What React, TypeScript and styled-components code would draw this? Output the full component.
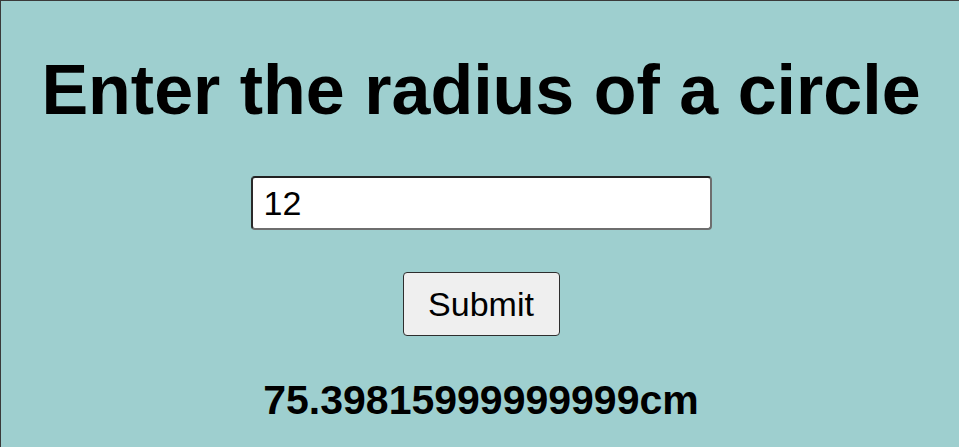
import React, { useState } from 'react';
import styled, { createGlobalStyle } from 'styled-components';

const GlobalStyle = createGlobalStyle`
  html, body {
    margin: 0;
    padding: 0;
    height: 100%;
  }
  body {
    background: #9ecfcf;
    font-family: 'Liberation Sans', Arial, sans-serif;
  }
  #root {
    min-height: 100%;
  }
`;

const Page = styled.div`
  box-sizing: border-box;
  min-height: 100vh;
  border-top: 1px solid #3a3a3a;
  border-left: 1px solid #3a3a3a;
  padding: 49px 0 0 2px;
  display: flex;
  flex-direction: column;
  align-items: center;
  background: #9ecfcf;
`;

const Heading = styled.h1`
  margin: 0 0 46px;
  font-size: 70px;
  font-weight: 700;
  line-height: normal;
  color: #000;
  white-space: nowrap;
`;

const RadiusInput = styled.input`
  box-sizing: border-box;
  width: 461px;
  height: 54px;
  padding: 0 11px;
  font-family: 'Liberation Sans', Arial, sans-serif;
  font-size: 34px;
  color: #000;
  background: #fff;
  border-style: solid;
  border-width: 2px;
  border-color: #222 #6e6e6e #6e6e6e #2a2a2a;
  border-radius: 4px;
  outline: none;
`;

const SubmitButton = styled.button`
  box-sizing: border-box;
  margin-top: 42px;
  width: 157px;
  height: 64px;
  padding: 0;
  font-family: 'Liberation Sans', Arial, sans-serif;
  font-size: 34px;
  color: #000;
  background: #efefef;
  border: 1px solid #2e2e2e;
  border-radius: 4px;
  cursor: pointer;
`;

const Result = styled.h2`
  margin: 41px 0 0;
  font-size: 41px;
  font-weight: 700;
  line-height: normal;
  color: #000;
`;

export default function App() {
  const [radius, setRadius] = useState('12');
  const [area, setArea] = useState<number>(2 * 3.14159 * 12);

  return (
    <Page>
      <GlobalStyle />
      <Heading>Enter the radius of a circle</Heading>
      <RadiusInput
        type="text"
        value={radius}
        onChange={(e) => setRadius(e.target.value)}
      />
      <SubmitButton onClick={() => setArea(2 * 3.14159 * Number(radius))}>
        Submit
      </SubmitButton>
      <Result>{area}cm</Result>
    </Page>
  );
}
